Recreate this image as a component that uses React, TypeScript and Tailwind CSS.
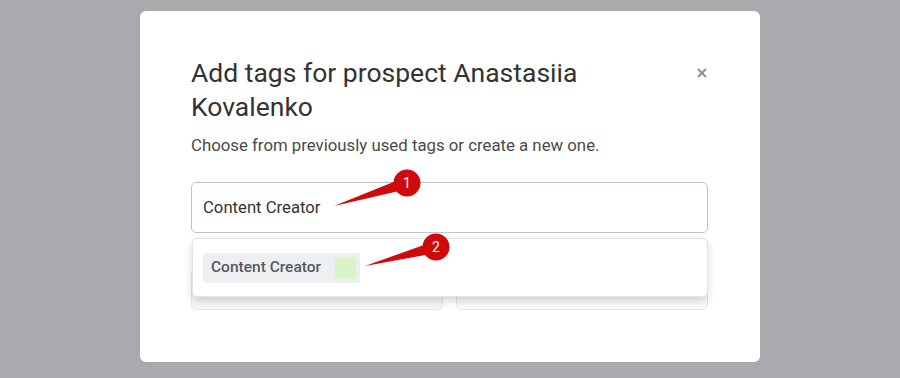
import { X } from 'lucide-react';

function Marker({ n, tipX, tipY, cx, cy }: { n: number; tipX: number; tipY: number; cx: number; cy: number }) {
	const dx = cx - tipX;
	const dy = cy - tipY;
	const len = Math.hypot(dx, dy);
	const nx = -dy / len;
	const ny = dx / len;
	const w = 6;
	const pts = `${tipX},${tipY} ${cx + nx * w},${cy + ny * w} ${cx - nx * w},${cy - ny * w}`;
	return (
		<g>
			<polygon points={pts} fill="#d00a0a" />
			<circle cx={cx} cy={cy} r={13.5} fill="#d00a0a" />
			<text x={cx} y={cy + 5} textAnchor="middle" fontSize="14" fill="#fff" fontFamily="Roboto, sans-serif">
				{n}
			</text>
		</g>
	);
}

export default function App() {
	return (
		<div className="relative w-[900px] h-[378px] bg-[#a9aaae] pt-[11px] overflow-hidden" style={{ fontFamily: 'Roboto, "Liberation Sans", sans-serif' }}>
			<div className="relative mx-auto w-[620px] h-[351px] bg-white rounded-md pl-[51px] pr-[52px] pt-[45px]">
				<div className="flex items-start justify-between">
					<h2 className="text-[26.5px] leading-[34px] text-[#333] font-normal w-[430px]">
						Add tags for prospect Anastasiia Kovalenko
					</h2>
					<button className="mt-[10px] mr-[-1px] text-[#8b9099]">
						<X size={14} strokeWidth={3.2} />
					</button>
				</div>
				<p className="mt-[10px] text-[16.8px] leading-[22px] text-[#4a4a4a]">
					Choose from previously used tags or create a new one.
				</p>
				<div className="relative mt-[26px]">
					<div className="h-[51px] border border-[#bfc3c9] rounded-[5px] flex items-center px-[11px] text-[16.7px] text-[#333]">
						Content Creator
					</div>
					<div className="grid grid-cols-2 gap-[13px] mt-[36px]">
						<div className="h-[41px] border border-[#e6e7ec] rounded-[5px] bg-[#f7f7fa]" />
						<div className="h-[41px] border border-[#e6e7ec] rounded-[5px] bg-[#fafafc]" />
					</div>
					<div className="absolute left-[1px] right-0 top-[56px] h-[59px] bg-white border border-[#e4e5ea] rounded-[5px] shadow-[0_4px_8px_rgba(0,0,0,0.16)] flex items-center px-[10px]">
						<div className="flex items-center h-[30px] bg-[#eeeff3] rounded-[3px] pl-[8px] pr-[4px] gap-[14px]">
							<span className="text-[15.5px] font-medium text-[#555a60]">Content Creator</span>
							<span className="w-[21px] h-[22px] rounded-[3px] bg-[#d9f5c8]" />
						</div>
					</div>
				</div>
			</div>
			<svg className="absolute inset-0 pointer-events-none" width="900" height="378">
				<Marker n={1} tipX={334} tipY={206} cx={407} cy={183} />
				<Marker n={2} tipX={365} tipY={266} cx={436} cy={247} />
			</svg>
		</div>
	);
}
